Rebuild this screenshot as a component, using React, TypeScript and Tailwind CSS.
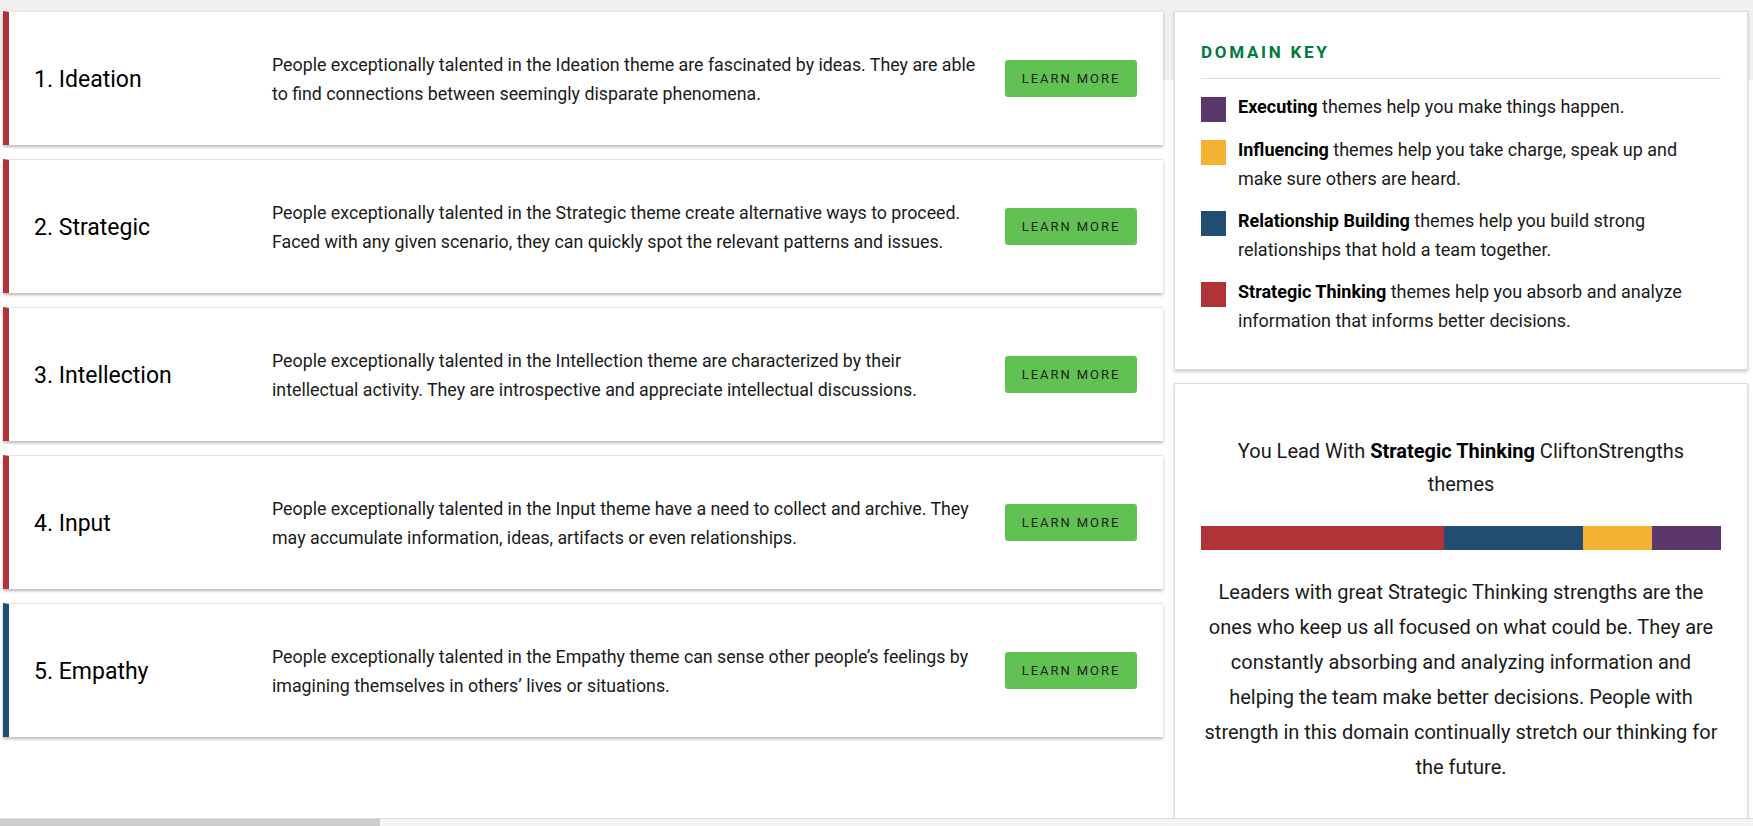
import { FC } from "react";

type Theme = {
  rank: number;
  name: string;
  color: string;
  lines: string[];
};

const themes: Theme[] = [
  {
    rank: 1,
    name: "Ideation",
    color: "border-l-[#b03338]",
    lines: [
      "People exceptionally talented in the Ideation theme are fascinated by ideas. They are able",
      "to find connections between seemingly disparate phenomena.",
    ],
  },
  {
    rank: 2,
    name: "Strategic",
    color: "border-l-[#b03338]",
    lines: [
      "People exceptionally talented in the Strategic theme create alternative ways to proceed.",
      "Faced with any given scenario, they can quickly spot the relevant patterns and issues.",
    ],
  },
  {
    rank: 3,
    name: "Intellection",
    color: "border-l-[#b03338]",
    lines: [
      "People exceptionally talented in the Intellection theme are characterized by their",
      "intellectual activity. They are introspective and appreciate intellectual discussions.",
    ],
  },
  {
    rank: 4,
    name: "Input",
    color: "border-l-[#b03338]",
    lines: [
      "People exceptionally talented in the Input theme have a need to collect and archive. They",
      "may accumulate information, ideas, artifacts or even relationships.",
    ],
  },
  {
    rank: 5,
    name: "Empathy",
    color: "border-l-[#214d73]",
    lines: [
      "People exceptionally talented in the Empathy theme can sense other people\u2019s feelings by",
      "imagining themselves in others\u2019 lives or situations.",
    ],
  },
];

const domains = [
  {
    swatch: "bg-[#5c376c]",
    bold: "Executing",
    lines: ["themes help you make things happen."],
  },
  {
    swatch: "bg-[#f4b234]",
    bold: "Influencing",
    lines: ["themes help you take charge, speak up and", "make sure others are heard."],
  },
  {
    swatch: "bg-[#214d73]",
    bold: "Relationship Building",
    lines: ["themes help you build strong", "relationships that hold a team together."],
  },
  {
    swatch: "bg-[#b03338]",
    bold: "Strategic Thinking",
    lines: ["themes help you absorb and analyze", "information that informs better decisions."],
  },
];

const leadLines = [
  "Leaders with great Strategic Thinking strengths are the",
  "ones who keep us all focused on what could be. They are",
  "constantly absorbing and analyzing information and",
  "helping the team make better decisions. People with",
  "strength in this domain continually stretch our thinking for",
  "the future.",
];

const ThemeCard: FC<{ theme: Theme }> = ({ theme }) => (
  <div
    className={`flex h-[134px] shrink-0 items-center border-l-[6px] ${theme.color} border-t border-t-[#e4e4e4] bg-white pl-[25px] pr-[26px] shadow-[0_2px_3px_rgba(0,0,0,0.28)]`}
  >
    <div className="mt-[3px] w-[238px] shrink-0 text-[23px] text-black">
      {theme.rank}. {theme.name}
    </div>
    <div className="flex-1 text-[17.8px] leading-[29px] text-[#1a1a1a]">
      {theme.lines.map((l) => (
        <span key={l} className="block whitespace-nowrap">
          {l}
        </span>
      ))}
    </div>
    <button className="h-[37px] w-[132px] shrink-0 rounded-[3px] bg-[#62c153] text-[13px] tracking-[0.15em] text-[#1d1d1d]">
      LEARN MORE
    </button>
  </div>
);

export default function App() {
  return (
    <div className="flex h-[826px] flex-col overflow-hidden font-['Roboto',sans-serif]">
      <div className="flex flex-1 gap-[11px] overflow-hidden bg-[linear-gradient(to_bottom,#f0f0f0_80px,#ffffff_80px)] pl-[3px] pt-[11px]">
        <div className="flex w-[1160px] shrink-0 flex-col gap-[14px]">
          {themes.map((t) => (
            <ThemeCard key={t.rank} theme={t} />
          ))}
        </div>

        <div className="flex w-[574px] shrink-0 flex-col gap-[13px]">
          <div className="h-[359px] shrink-0 border border-[#dcdcdc] bg-white px-[26px] pt-[29px] shadow-[0_2px_3px_rgba(0,0,0,0.2)]">
            <h2 className="text-[17px] font-bold leading-[22px] tracking-[0.16em] text-[#007a3d]">
              DOMAIN KEY
            </h2>
            <div className="mt-[15px] border-t border-[#dedede]" />
            <div className="mt-[13px] flex flex-col gap-[13px]">
              {domains.map((d) => (
                <div key={d.bold} className="flex gap-[12px]">
                  <div className={`mt-[5px] h-[25px] w-[25px] shrink-0 ${d.swatch}`} />
                  <div className="text-[18px] leading-[29px] text-[#1a1a1a]">
                    {d.lines.map((l, i) => (
                      <span key={l} className="block whitespace-nowrap">
                        {i === 0 && <b className="font-bold text-black">{d.bold} </b>}
                        {l}
                      </span>
                    ))}
                  </div>
                </div>
              ))}
            </div>
          </div>

          <div className="h-[600px] shrink-0 border border-[#dcdcdc] bg-white px-[26px] pt-[51px] text-center shadow-[0_2px_3px_rgba(0,0,0,0.2)]">
            <p className="text-[20px] leading-[33px] text-[#1a1a1a]">
              You Lead With <b className="font-bold text-black">Strategic Thinking</b> CliftonStrengths
              <br />
              themes
            </p>
            <div className="mt-[25px] flex h-[24px] w-full">
              <div className="w-[46.7%] bg-[#b03338]" />
              <div className="w-[26.7%] bg-[#214d73]" />
              <div className="w-[13.3%] bg-[#f4b234]" />
              <div className="w-[13.3%] bg-[#5c376c]" />
            </div>
            <p className="mt-[25px] text-[20px] leading-[35px] text-[#1a1a1a]">
              {leadLines.map((l) => (
                <span key={l} className="block whitespace-nowrap">
                  {l}
                </span>
              ))}
            </p>
          </div>
        </div>
      </div>

      <div className="flex h-[8px] shrink-0 border-t border-[#dcdcdc] bg-[#f3f3f3]">
        <div className="w-[380px] bg-[#cdcdcd]" />
      </div>
    </div>
  );
}
